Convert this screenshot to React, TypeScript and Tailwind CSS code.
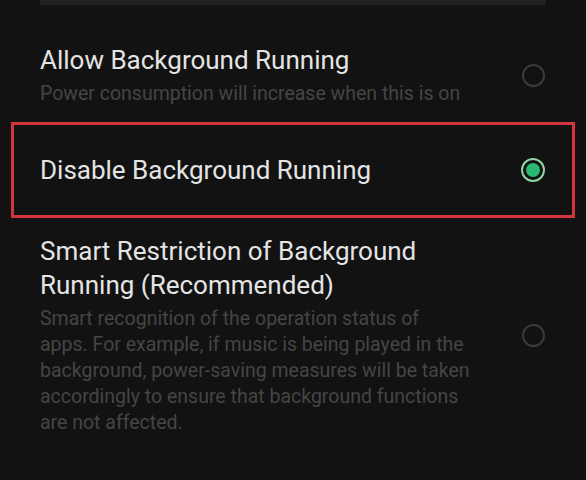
import React from 'react'

const font = { fontFamily: 'Roboto, "Noto Sans", sans-serif' }

function Radio({ checked }: { checked?: boolean }) {
  if (checked) {
    return (
      <div className="flex h-[24px] w-[24px] shrink-0 items-center justify-center rounded-full border-2 border-[#8fd3a6]">
        <div className="h-[14px] w-[14px] rounded-full bg-[#27bb70]" />
      </div>
    )
  }
  return <div className="h-[23px] w-[23px] shrink-0 rounded-full border-2 border-[#3a3a3a]" />
}

export default function App() {
  return (
    <div className="min-h-[480px] w-[586px] overflow-hidden bg-[#121212]" style={font}>
      <div className="mx-[40px] h-[5px] bg-[#212121]" />

      <div className="mt-[38px] flex items-center justify-between pl-[40px] pr-[41px]">
        <div>
          <div className="text-[26px] leading-[34px] text-[#e4e4e4]">Allow Background Running</div>
          <div className="mt-[4px] text-[19.5px] leading-[26px] text-[#454545]">
            Power consumption will increase when this is on
          </div>
        </div>
        <Radio />
      </div>

      <div className="mx-[11px] mt-[15px] flex h-[96px] items-center justify-between border-[3px] border-[#d2353d] pl-[26px] pr-[27px]">
        <div className="text-[26px] leading-[34px] text-[#e4e4e4]">Disable Background Running</div>
        <Radio checked />
      </div>

      <div className="mt-[16px] flex items-center justify-between pl-[40px] pr-[41px]">
        <div>
          <div className="text-[26px] leading-[34px] text-[#e4e4e4]">
            Smart Restriction of Background
            <br />
            Running (Recommended)
          </div>
          <div className="mt-[4px] text-[19.5px] leading-[26px] text-[#454545]">
            Smart recognition of the operation status of
            <br />
            apps. For example, if music is being played in the
            <br />
            background, power-saving measures will be taken
            <br />
            accordingly to ensure that background functions
            <br />
            are not affected.
          </div>
        </div>
        <Radio />
      </div>
    </div>
  )
}
